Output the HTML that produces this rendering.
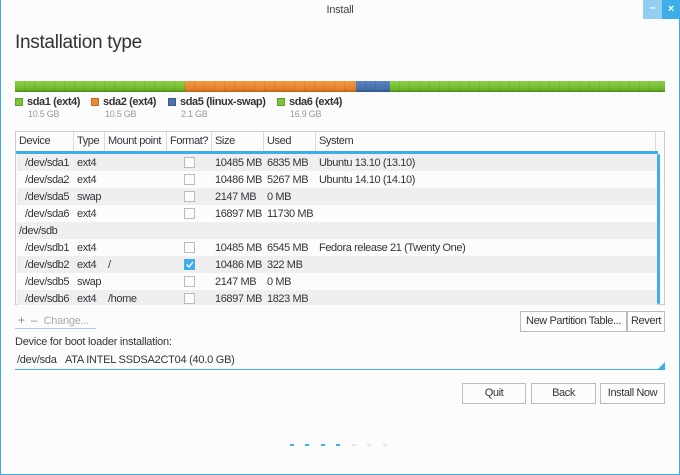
<!DOCTYPE html>
<html><head><meta charset="utf-8"><style>
*{margin:0;padding:0;box-sizing:border-box}
body{width:680px;height:475px;background:#fcfcfc;font-family:"Liberation Sans",sans-serif;font-size:11px;color:#31363b;position:relative;overflow:hidden;letter-spacing:-0.25px}
.frame{position:absolute;left:0;top:0;width:680px;height:475px;border:1px solid #3daee9;border-top:none}
.a{position:absolute;white-space:nowrap}
.title{left:0;width:680px;top:4px;text-align:center;font-size:11px;color:#444}
.min{left:643px;top:0;width:19px;height:19px;background:#93cef0;color:#fff;text-align:center;font-size:11px;line-height:17px;font-weight:bold}
.cls{left:662px;top:0;width:18px;height:19px;background:#3daee9;color:#fff;text-align:center;font-size:11px;line-height:18px;font-weight:bold}
h1{position:absolute;left:15px;top:32px;font-size:19px;font-weight:normal;color:#333;letter-spacing:-0.3px}
.bar{position:absolute;top:81px;height:11px;background-image:repeating-linear-gradient(90deg,rgba(0,0,0,0) 0 9px,rgba(0,0,0,.08) 9px 10px),linear-gradient(#8ed04a,#6eb82a 75%,#4e8a1c)}
.leg{top:96px;font-size:11px;font-weight:bold;color:#333;letter-spacing:-0.4px}
.leg i{display:inline-block;width:8px;height:8px;vertical-align:-1px;margin-right:4px;border:1px solid rgba(0,0,0,.2)}
.sub{top:109px;font-size:9px;color:#999}
.tbl{position:absolute;left:15px;top:131px;width:650px;height:174px;border:1px solid #ccc;background:#fcfcfc}
.hd{position:absolute;top:0;height:20px;line-height:19px;border-right:1px solid #ddd;padding-left:3px;font-size:11px;overflow:hidden;letter-spacing:-0.4px}
.row{position:absolute;left:1px;width:640px;height:17px;line-height:18px;letter-spacing:-0.4px}
.row.g{background:#efefef}
.c{position:absolute;top:0}
.cb{position:absolute;left:167px;top:3px;width:11px;height:11px;border:1px solid #bbb;background:#fcfcfc}
.btn{position:absolute;height:21px;border:1px solid #bbb;background:#fcfcfc;text-align:center;line-height:19px;font-size:11px;letter-spacing:-0.4px}
</style></head><body>
<div class="a title">Install</div>
<div class="a min">–</div>
<div class="a cls">×</div>
<h1>Installation type</h1>
<div class="bar" style="left:15px;width:170px"></div>
<div class="bar" style="left:185px;width:171px;background-image:repeating-linear-gradient(90deg,rgba(0,0,0,0) 0 9px,rgba(0,0,0,.08) 9px 10px),linear-gradient(#f39a45,#e5802a 75%,#b8601a)"></div>
<div class="bar" style="left:356px;width:34px;background-image:repeating-linear-gradient(90deg,rgba(0,0,0,0) 0 9px,rgba(0,0,0,.08) 9px 10px),linear-gradient(#5a85c0,#4470aa 75%,#2f5585)"></div>
<div class="bar" style="left:390px;width:275px"></div>
<div class="a leg" style="left:15px"><i style="background:#7cc43a"></i>sda1 (ext4)</div>
<div class="a leg" style="left:91px"><i style="background:#ec8a32"></i>sda2 (ext4)</div>
<div class="a leg" style="left:168px"><i style="background:#4a74b0"></i>sda5 (linux-swap)</div>
<div class="a leg" style="left:277px"><i style="background:#7cc43a"></i>sda6 (ext4)</div>
<div class="a sub" style="left:28px">10.5 GB</div>
<div class="a sub" style="left:105px">10.5 GB</div>
<div class="a sub" style="left:181px">2.1 GB</div>
<div class="a sub" style="left:290px">16.9 GB</div>

<div class="tbl">
<div class="hd" style="left:0;width:58px">Device</div>
<div class="hd" style="left:58px;width:31px">Type</div>
<div class="hd" style="left:89px;width:62px">Mount point</div>
<div class="hd" style="left:151px;width:45px">Format?</div>
<div class="hd" style="left:196px;width:52px">Size</div>
<div class="hd" style="left:248px;width:52px">Used</div>
<div class="hd" style="left:300px;width:340px">System</div>
<div style="position:absolute;left:0;top:19px;width:642px;height:3px;background:#3daee9"></div>
<div style="position:absolute;left:641px;top:22px;width:3px;height:150px;background:#3daee9;border-radius:2px"></div>

<div class="row g" style="top:22px"><span class="c" style="left:8px">/dev/sda1</span><span class="c" style="left:60px">ext4</span><div class="cb"></div><span class="c" style="left:198px">10485 MB</span><span class="c" style="left:250px">6835 MB</span><span class="c" style="left:302px">Ubuntu 13.10 (13.10)</span></div>
<div class="row" style="top:39px"><span class="c" style="left:8px">/dev/sda2</span><span class="c" style="left:60px">ext4</span><div class="cb"></div><span class="c" style="left:198px">10486 MB</span><span class="c" style="left:250px">5267 MB</span><span class="c" style="left:302px">Ubuntu 14.10 (14.10)</span></div>
<div class="row g" style="top:56px"><span class="c" style="left:8px">/dev/sda5</span><span class="c" style="left:60px">swap</span><div class="cb"></div><span class="c" style="left:198px">2147 MB</span><span class="c" style="left:250px">0 MB</span></div>
<div class="row" style="top:73px"><span class="c" style="left:8px">/dev/sda6</span><span class="c" style="left:60px">ext4</span><div class="cb"></div><span class="c" style="left:198px">16897 MB</span><span class="c" style="left:250px">11730 MB</span></div>
<div class="row g" style="top:90px"><span class="c" style="left:2px">/dev/sdb</span></div>
<div class="row" style="top:107px"><span class="c" style="left:8px">/dev/sdb1</span><span class="c" style="left:60px">ext4</span><div class="cb"></div><span class="c" style="left:198px">10485 MB</span><span class="c" style="left:250px">6545 MB</span><span class="c" style="left:302px">Fedora release 21 (Twenty One)</span></div>
<div class="row g" style="top:124px"><span class="c" style="left:8px">/dev/sdb2</span><span class="c" style="left:60px">ext4</span><span class="c" style="left:91px">/</span><div class="cb" style="background:#3daee9;border-color:#3daee9"><svg width="9" height="9" style="position:absolute;left:0;top:0"><path d="M1.5 4.5 L4 7 L8 2" stroke="#fff" stroke-width="1.3" fill="none"/></svg></div><span class="c" style="left:198px">10486 MB</span><span class="c" style="left:250px">322 MB</span></div>
<div class="row" style="top:141px"><span class="c" style="left:8px">/dev/sdb5</span><span class="c" style="left:60px">swap</span><div class="cb"></div><span class="c" style="left:198px">2147 MB</span><span class="c" style="left:250px">0 MB</span></div>
<div class="row g" style="top:158px;height:15px"><span class="c" style="left:8px">/dev/sdb6</span><span class="c" style="left:60px">ext4</span><span class="c" style="left:91px">/home</span><div class="cb"></div><span class="c" style="left:198px">16897 MB</span><span class="c" style="left:250px">1823 MB</span></div>
</div>

<div class="a" style="left:18px;top:313px;color:#888;font-size:12px">+&nbsp;&nbsp;–&nbsp; <span style="font-size:11px;color:#aaa">Change...</span></div>
<div style="position:absolute;left:15px;top:328px;width:81px;height:1px;background:#9dd3f0"></div>
<div class="btn" style="left:520px;top:311px;width:107px">New Partition Table...</div>
<div class="btn" style="left:627px;top:311px;width:38px">Revert</div>
<div class="a" style="left:15px;top:336px">Device for boot loader installation:</div>
<div class="a" style="left:17px;top:354px">/dev/sda&nbsp;&nbsp;&nbsp;ATA INTEL SSDSA2CT04 (40.0 GB)</div>
<div style="position:absolute;left:15px;top:369px;width:650px;height:1px;background:#3daee9"></div>
<svg style="position:absolute;left:658px;top:362px" width="7" height="7"><path d="M7 0 L7 7 L0 7Z" fill="#3daee9"/></svg>

<div class="btn" style="left:462px;top:383px;width:64px">Quit</div>
<div class="btn" style="left:531px;top:383px;width:65px">Back</div>
<div class="btn" style="left:600px;top:383px;width:65px">Install Now</div>

<div style="position:absolute;left:290px;top:444px;width:4px;height:2px;background:#3daee9"></div>
<div style="position:absolute;left:305px;top:444px;width:4px;height:2px;background:#3daee9"></div>
<div style="position:absolute;left:321px;top:444px;width:4px;height:2px;background:#3daee9"></div>
<div style="position:absolute;left:336px;top:444px;width:4px;height:2px;background:#3daee9"></div>
<div style="position:absolute;left:352px;top:444px;width:4px;height:2px;background:#e5e5e5"></div>
<div style="position:absolute;left:367px;top:444px;width:4px;height:2px;background:#e5e5e5"></div>
<div style="position:absolute;left:383px;top:444px;width:4px;height:2px;background:#e5e5e5"></div>
<div class="frame"></div>
</body></html>
